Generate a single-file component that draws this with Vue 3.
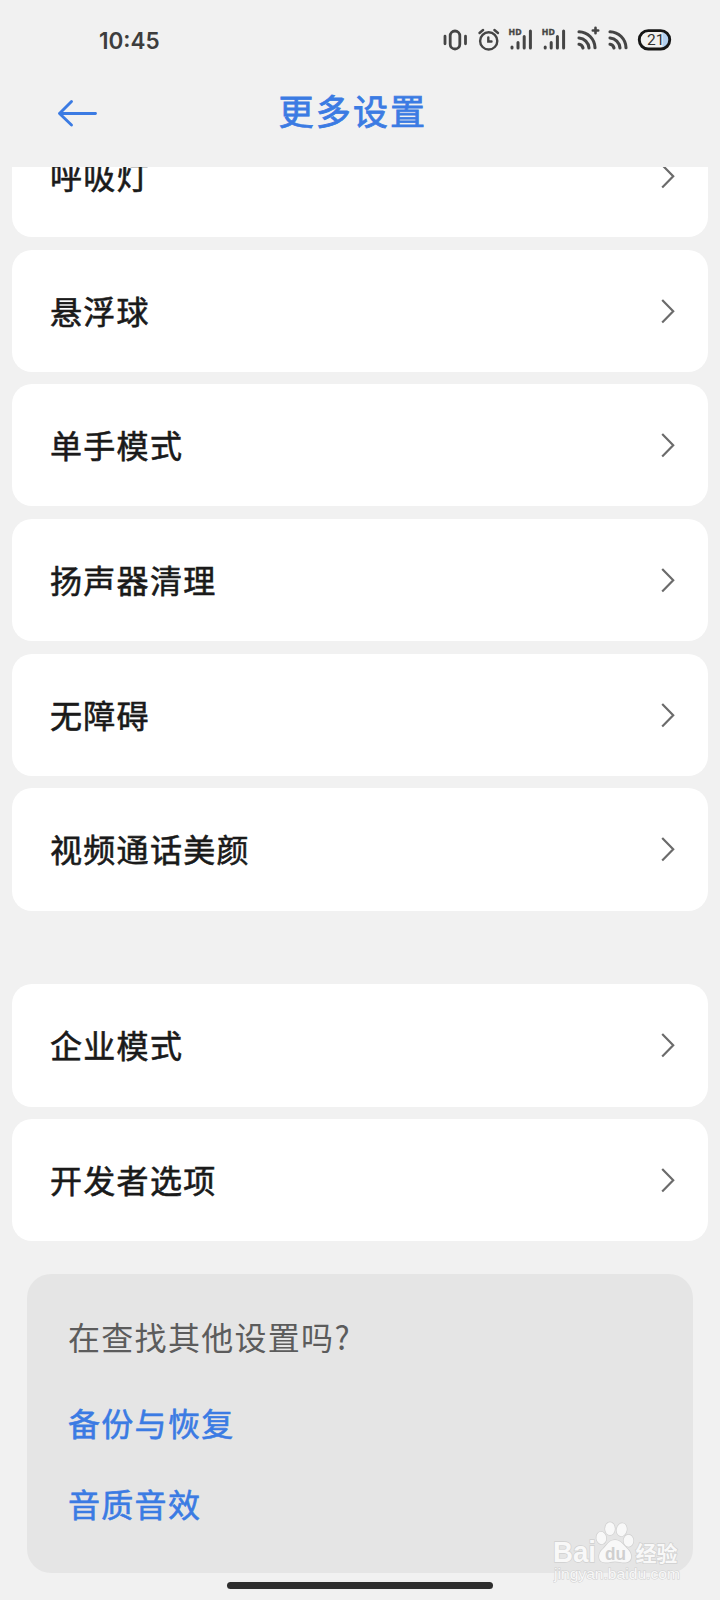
<template>
  <div class="screen">
    <div class="status-bar">
      <span class="clock">10:45</span>
      <svg class="status-icons" width="232" height="32" viewBox="0 0 232 32" fill="none" stroke="#454545"
        stroke-width="2.4" stroke-linecap="round">
        <!-- vibrate -->
        <rect x="10.2" y="7" width="9.6" height="18" rx="4.8" stroke-width="2.8" />
        <path d="M5 12.2v7.6M25.5 12.2v7.6" stroke-width="2.8" />
        <!-- alarm -->
        <circle cx="48.7" cy="16.9" r="8.6" />
        <path d="M48.3 13.5v4h3.2M39.5 9l3.6-3M58 9l-3.6-3" />
        <!-- signal -->
        <g v-for="x in [0, 33.2]" :key="x" :transform="`translate(${x} 0)`">
          <path d="M72 22.9v1M78 18.5V24M84.2 12.5V24M90.4 7v17" stroke-width="3" />
          <text x="68.6" y="11.4" class="hd" textLength="13" lengthAdjust="spacingAndGlyphs">HD</text>
        </g>
        <!-- feeds -->
        <g stroke-width="3.1">
          <path d="M139 7.7a16.5 16.5 0 0 1 16 16M139 14a11 11 0 0 1 10 10M139 20.3a5 5 0 0 1 4 3.7" />
          <path d="M155.5 3.8v5.4M152.8 6.5h5.4" stroke-width="2.6" />
          <path d="M170 7.7a16.5 16.5 0 0 1 16 16M170 14a11 11 0 0 1 10 10M170 20.3a5 5 0 0 1 4 3.7" />
        </g>
        <!-- battery -->
        <path d="M222.5 8h1.500q4.500 3 4.500 8t-4.500 8h-1.500z" fill="#b4d0ef" stroke="none" />
        <rect x="199.3" y="6.6" width="30.4" height="18.4" rx="9" stroke="#161616" stroke-width="2.9" />
        <text x="207" y="21.3" class="level">21</text>
      </svg>
    </div>

    <header class="header">
      <svg class="back" width="42" height="32" viewBox="0 0 42 32" fill="none" stroke="#3b7be3" stroke-width="2.9"
        stroke-linecap="round" stroke-linejoin="round">
        <path d="M15.5 4.5l-12 12 12 11.5M3.500 16.500h36" />
      </svg>
      <h1 class="title">更多设置</h1>
    </header>

    <main class="content">
      <section v-for="(group, i) in groups" :key="i" class="group">
        <div v-for="item in group" :key="item" class="card">
          <span class="label">{{ item }}</span>
          <svg width="16" height="26" viewBox="0 0 16 26" fill="none" stroke="#6b6b6b" stroke-width="2.2">
            <path d="M2.2 2L13.2 13.2 2.200 24.400" />
          </svg>
        </div>
      </section>

      <section class="more">
        <p class="question">在查找其他设置吗?</p>
        <a v-for="link in links" :key="link" class="link">{{ link }}</a>
      </section>
    </main>

    <div class="home-bar"></div>

    <svg class="watermark" width="140" height="70" viewBox="0 0 140 70">
      <g class="mark">
        <text x="0" y="41.5" class="brand" textLength="43" lengthAdjust="spacingAndGlyphs">Bai</text>
        <ellipse cx="48.3" cy="18" rx="4.9" ry="6.2" transform="rotate(-8 48.3 18)" />
        <ellipse cx="57" cy="8.7" rx="4.9" ry="6.4" />
        <ellipse cx="68.7" cy="9.7" rx="5" ry="6.5" transform="rotate(12 68.7 9.7)" />
        <ellipse cx="75.5" cy="20.7" rx="4.9" ry="6" />
        <path d="M62 20c-6 0-8 5-12 9-5 4-6 13 2 13.5 4 .3 6-1 10-1s7 1.4 11 1c7-1 6-9 2-13-4-3.5-7-9.5-13-9.5z" />
        <text x="82.5" y="40.5" class="cn" textLength="42" lengthAdjust="spacingAndGlyphs">经验</text>
        <text x="1" y="58.5" class="site" textLength="126" lengthAdjust="spacingAndGlyphs">jingyan.baidu.com</text>
      </g>
      <text x="52" y="39.5" class="du" textLength="21" lengthAdjust="spacingAndGlyphs">du</text>
    </svg>
  </div>
</template>

<script setup>
const groups = [
  ['呼吸灯', '悬浮球', '单手模式', '扬声器清理', '无障碍', '视频通话美颜'],
  ['企业模式', '开发者选项']
]

const links = ['备份与恢复', '音质音效']
</script>

<style>
body {
  margin: 0;
  background: #f1f1f1;
}
</style>

<style scoped>
.screen {
  position: relative;
  display: flex;
  flex-direction: column;
  width: 720px;
  height: 1600px;
  overflow: hidden;
  background: #f1f1f1;
  font-family: "Noto Sans CJK SC", "Noto Sans", sans-serif;
}

.status-bar {
  display: flex;
  justify-content: space-between;
  align-items: center;
  height: 80px;
  padding: 0 48px 0 99px;
  box-sizing: border-box;
}

.clock {
  padding-top: 2px;
  font: 600 22.5px/32px Inter, sans-serif;
  color: #3d3d3d;
}

.hd {
  font: 700 8.5px "Open Sans", sans-serif;
  fill: #454545;
  stroke: #454545;
  stroke-width: 0.4px;
}

.level {
  font: 400 15.5px Roboto, sans-serif;
  fill: #333;
  stroke: none;
}

.header {
  display: flex;
  align-items: flex-start;
  height: 87px;
  flex: none;
}

.back {
  margin: 17px 0 0 56px;
}

.title {
  margin: 5px 0 0 180.5px;
  font-size: 35px;
  line-height: 50px;
  font-weight: 400;
  letter-spacing: 2.2px;
  color: #3b7be3;
  -webkit-text-stroke: 0.8px #3b7be3;
}

.content {
  flex: 1;
  min-height: 0;
  overflow: hidden;
}

.group {
  display: flex;
  flex-direction: column;
  gap: 12.4px;
  margin: 0 12px 73.7px;
}

.group:first-child {
  margin-top: -52.2px;
}

.card {
  display: flex;
  justify-content: space-between;
  align-items: center;
  height: 122.3px;
  padding: 0 32px 0 38px;
  box-sizing: border-box;
  border-radius: 20px;
  background: #fff;
  font-size: 32px;
  line-height: 48px;
  letter-spacing: 1.3px;
  color: #1a1a1a;
  -webkit-text-stroke: 0.6px #1a1a1a;
}

.label {
  padding-bottom: 2px;
}

.more {
  height: 299px;
  margin: -41px 27px 0;
  padding: 38.5px 41px 0;
  box-sizing: border-box;
  border-radius: 24px;
  background: #e5e5e5;
  font-size: 32px;
  line-height: 48px;
  letter-spacing: 1.3px;
}

.question {
  margin: 0 0 37.5px;
  color: #5c5c5c;
}

.link {
  display: block;
  margin-bottom: 33.5px;
  color: #3b7be3;
  -webkit-text-stroke: 0.6px #3b7be3;
}

.home-bar {
  position: absolute;
  left: 227px;
  top: 1582px;
  width: 266px;
  height: 7px;
  border-radius: 4px;
  background: #2e2e2e;
}

.watermark {
  position: absolute;
  left: 553px;
  top: 1520px;
}

.mark {
  fill: #f8f8f8;
  stroke: #d0d0d0;
  stroke-width: 1.4px;
  paint-order: stroke;
}

.brand {
  font: 700 29px "Liberation Sans", sans-serif;
}

.cn {
  font: 700 21px "Noto Sans CJK SC", sans-serif;
}

.site {
  font: 400 14.5px "Liberation Sans", sans-serif;
  stroke-width: 1px;
}

.du {
  font: 700 18px "Liberation Sans", sans-serif;
  fill: #cfcfcf;
}
</style>
